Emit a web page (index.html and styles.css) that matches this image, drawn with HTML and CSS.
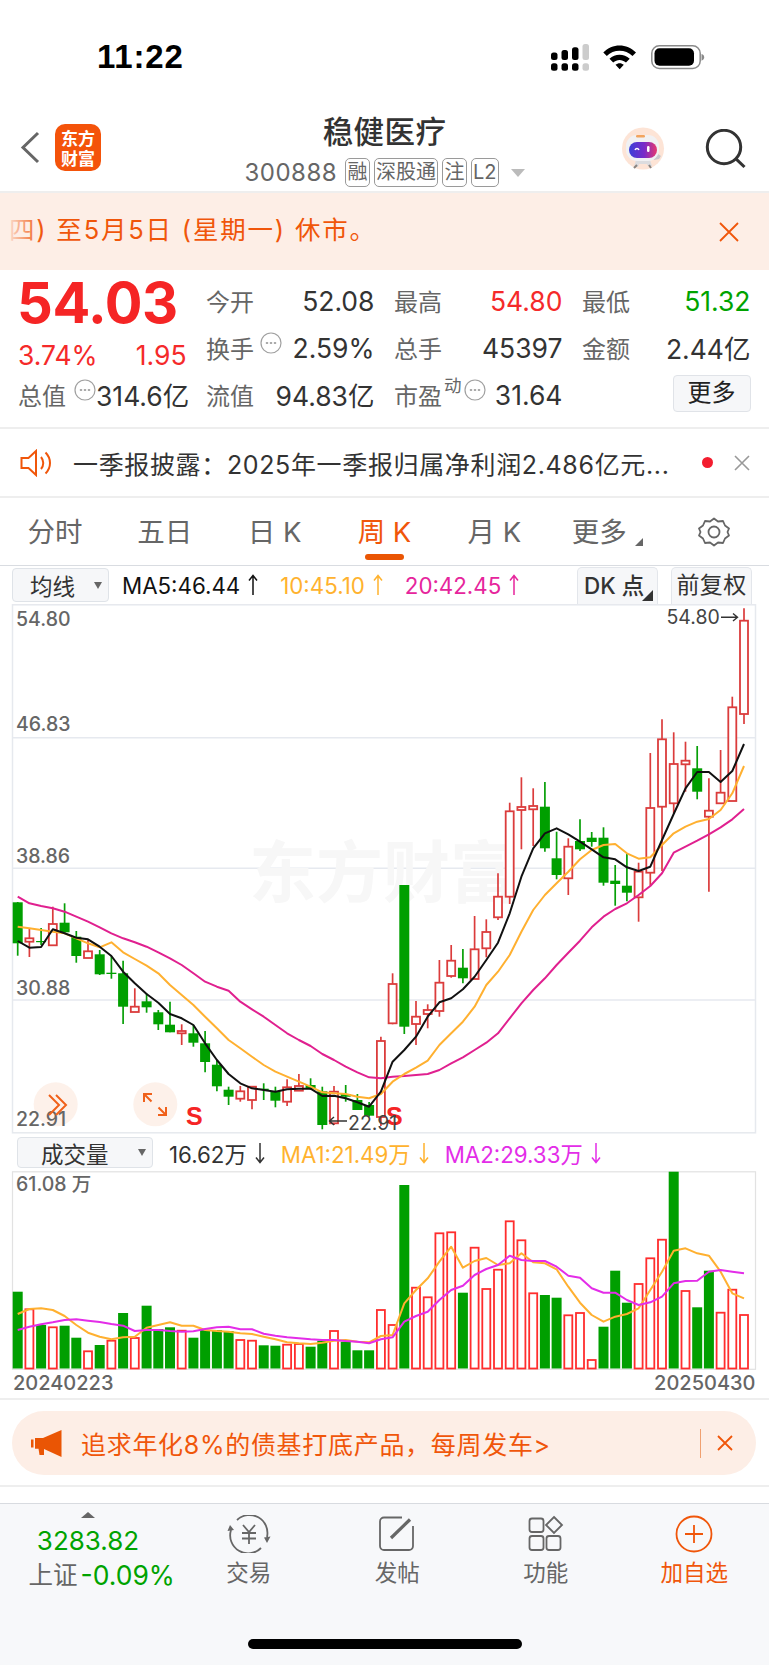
FILE: index.html
```html
<!DOCTYPE html>
<html lang="zh-CN">
<head>
<meta charset="utf-8">
<title>稳健医疗</title>
<link rel="stylesheet" href="styles.css">
</head>
<body>
<div class="page">
  <div class="status">
    <div class="time">11:22</div>
    <svg class="status-icons" viewBox="545 40 165 35" width="165" height="35">
      <g class="sig">
        <rect x="551" y="52.5" width="6.5" height="7.5" rx="2.5"/><rect x="551" y="63.3" width="6.5" height="7.4" rx="2.5"/>
        <rect x="561.5" y="50" width="6.5" height="10" rx="2.5"/><rect x="561.5" y="63.3" width="6.5" height="7.4" rx="2.5"/>
        <rect x="572" y="47.3" width="6.5" height="12.7" rx="2.5"/><rect x="572" y="63.3" width="6.5" height="7.4" rx="2.5"/>
      </g>
      <g class="sig-off">
        <rect x="582.5" y="44" width="6.5" height="16" rx="2.5"/><rect x="582.5" y="63.3" width="6.5" height="7.4" rx="2.5"/>
      </g>
      <path class="wifi" d="M603.3 52.5C612 43 627 43 636 52.5L632.5 56C625.5 49 613.5 49 606.8 56ZM609.5 58.8C615 53.5 624 53.5 629.7 58.8L626 62.5C622 59 617 59 613.2 62.5ZM615.5 64.8C618 62.6 621.4 62.6 623.8 64.8L619.7 69.2Z"/>
      <rect class="bat-o" x="651.8" y="45.8" width="48.4" height="22.6" rx="7.5"/>
      <rect class="bat-i" x="654.5" y="48.3" width="39.5" height="17.5" rx="5"/>
      <path class="bat-c" d="M701.5 54C703.5 54.5 704.2 56 704.2 57.3S703.5 60.2 701.5 60.7Z"/>
    </svg>
  </div>

  <header class="nav">
    <div class="nav-left">
      <svg class="back" viewBox="0 0 20 33" width="20" height="33"><path d="M18 2L3 16.5L18 31"/></svg>
      <div class="logo"><span>东方</span><span>财富</span></div>
    </div>
    <div class="nav-mid">
      <h1 class="title">稳健医疗</h1>
      <div class="sub">
        <span class="code">300888</span>
        <span class="tag t1">融</span><span class="tag t3">深股通</span><span class="tag t1">注</span><span class="tag t2">L2</span>
        <span class="tri-down"></span>
      </div>
    </div>
    <div class="nav-right">
      <svg class="robot" viewBox="0 0 43 43" width="43" height="43">
        <defs>
          <linearGradient id="visor" x1="0" y1="0" x2="1" y2="0">
            <stop offset="0" stop-color="#3a3fd8"/><stop offset=".55" stop-color="#7a2bc8"/><stop offset="1" stop-color="#e8386e"/>
          </linearGradient>
        </defs>
        <circle class="rb-bg" cx="21" cy="21.5" r="21"/>
        <path class="rb-body" d="M14 33h14l2 6h-4l-1-2h-8l-1 3h-4Z"/>
        <path class="rb-arm" d="M31 30l5-3 3 2-2 3-5 1Z"/>
        <path class="rb-limb" d="M15 38l-3 3M27 38l2 3"/>
        <rect class="rb-head" x="4" y="8" width="33" height="26" rx="11"/>
        <rect class="rb-visor" x="7" y="15" width="28" height="16" rx="8" fill="url(#visor)"/>
        <path class="rb-eye" d="M13 23c1-2 3-2 4 0"/>
        <rect class="rb-eye2" x="25" y="19" width="2.5" height="6" rx="1.2"/>
        <rect class="rb-cap" x="14" y="8" width="9" height="2.5" rx="1.2"/>
      </svg>
      <svg class="search" viewBox="0 0 42 40" width="42" height="40"><circle cx="19" cy="18" r="16.7"/><path d="M31 29.8L39.5 38"/></svg>
    </div>
  </header>

  <div class="notice">
    <span class="notice-text">四) 至5月5日 (星期一) 休市。</span>
    <svg class="x-orange" viewBox="0 0 20 20" width="20" height="20"><path d="M1 1L19 19M19 1L1 19"/></svg>
    <span class="notice-fade"></span>
  </div>

  <section class="quote">
    <div class="price">54.03</div>
    <div class="cell"><span class="lb">今开</span><span class="val">52.08</span></div>
    <div class="cell"><span class="lb">最高</span><span class="val red">54.80</span></div>
    <div class="cell"><span class="lb">最低</span><span class="val green">51.32</span></div>
    <div class="cell low"><span class="val red">3.74%</span><span class="val red">1.95</span></div>
    <div class="cell">
      <span class="lb">换手</span>
      <svg class="info" viewBox="0 0 22 22" width="22" height="22"><circle cx="11" cy="11" r="10"/><path d="M6.5 11h1M10.5 11h1M14.5 11h1"/></svg>
      <span class="val push">2.59%</span>
    </div>
    <div class="cell"><span class="lb">总手</span><span class="val">45397</span></div>
    <div class="cell"><span class="lb">金额</span><span class="val">2.44亿</span></div>
    <div class="cell">
      <span class="lb">总值</span>
      <svg class="info info-b" viewBox="0 0 22 22" width="22" height="22"><circle cx="11" cy="11" r="10"/><path d="M6.5 11h1M10.5 11h1M14.5 11h1"/></svg>
      <span class="val push">314.6亿</span>
    </div>
    <div class="cell"><span class="lb">流值</span><span class="val">94.83亿</span></div>
    <div class="cell">
      <span class="lb">市盈</span><sup class="dyn">动</sup>
      <svg class="info" viewBox="0 0 22 22" width="22" height="22"><circle cx="11" cy="11" r="10"/><path d="M6.5 11h1M10.5 11h1M14.5 11h1"/></svg>
      <span class="val push">31.64</span>
    </div>
    <div class="cell end"><button class="more">更多</button></div>
  </section>

  <div class="news">
    <svg class="speaker" viewBox="0 0 33 28" width="33" height="28">
      <path d="M1.5 9h7L16 2v24l-7.500-7h-7Z"/><path d="M21 8c3 3.500 3 8.500 0 12"/><path d="M25.500 3.500c6 6 6 15 0 21"/>
    </svg>
    <span class="news-text">一季报披露：2025年一季报归属净利润2.486亿元...</span>
    <span class="dot"></span>
    <svg class="x-gray" viewBox="0 0 16 16" width="16" height="16"><path d="M1 1L15 15M15 1L1 15"/></svg>
  </div>

  <nav class="tabs">
    <div class="tab">分时</div>
    <div class="tab">五日</div>
    <div class="tab">日 K</div>
    <div class="tab on">周 K<span class="tab-u"></span></div>
    <div class="tab">月 K</div>
    <div class="tab tab-more">更多<span class="corner"></span></div>
    <div class="tab">
      <svg class="gear" viewBox="0 0 32 30" width="32" height="30"><path d="M16 1.500l4 3 5-.500 2 4.500 4 3-1.500 3.500 1.500 3.500-4 3-2 4.500-5-.500-4 3-4-3-5 .500-2-4.500-4-3 1.500-3.500L1 11.500l4-3 2-4.500 5 .500Z"/><circle cx="16" cy="15" r="5.500"/></svg>
    </div>
  </nav>

  <div class="bar bar-k">
    <div class="sel sel-k"><span>均线</span><i class="sel-tri"></i></div>
    <span class="ma c-black">MA5:46.44<svg class="ar" viewBox="0 0 12 22" width="12" height="22"><path d="M6 21V2M2 6.500L6 1.500L10 6.500"/></svg></span>
    <span class="ma c-orange">10:45.10<svg class="ar" viewBox="0 0 12 22" width="12" height="22"><path d="M6 21V2M2 6.500L6 1.500L10 6.500"/></svg></span>
    <span class="ma c-pink">20:42.45<svg class="ar" viewBox="0 0 12 22" width="12" height="22"><path d="M6 21V2M2 6.500L6 1.500L10 6.500"/></svg></span>
    <div class="btns">
      <div class="btn btn-dk">DK 点<i class="btn-corner"></i></div>
      <div class="btn">前复权</div>
    </div>
  </div>

  <svg class="chart" id="kchart" viewBox="0 604 769 530" width="769" height="530">
    <rect class="frame" x="12.5" y="604.8" width="743" height="528"/>
    <path class="grid" d="M13 737.700H755M13 868.300H755M13 1000H755"/>
    <text class="wm" x="249" y="897">东方财富</text>
    <circle class="fab" cx="55.700" cy="1104.300" r="22"/>
    <circle class="fab" cx="155.300" cy="1104.300" r="22"/>
    <text class="axis" x="16" y="626">54.80</text>
    <text class="axis" x="16" y="731">46.83</text>
    <text class="axis" x="16" y="862.500">38.86</text>
    <text class="axis" x="16" y="994.500">30.88</text>
    <text class="axis" x="16" y="1126">22.91</text>
    <g id="candles"></g>
    <path class="fab-ic" d="M49 1095L59 1105L49 1115M56 1095L66 1105L56 1115"/>
    <path class="fab-ic" d="M144 1102V1094H152M144 1094L151.500 1101.500M166 1107V1115H158M158.500 1107.500L166 1115"/>
    <text class="sflag" x="186" y="1125">S</text>
    <text class="sflag" x="386" y="1125">S</text>
    <text class="mark" x="666.500" y="624">54.80</text>
    <path class="mark-ar" d="M721 617.300H737M733 613.500L737.500 617.300L733 621"/>
    <text class="mark" x="348" y="1129.500">22.91</text>
    <path class="mark-ar" d="M347 1121H330M334 1117L329.500 1121L334 1125"/>
  </svg>

  <div class="bar bar-v">
    <div class="sel sel-v"><span>成交量</span><i class="sel-tri"></i></div>
    <span class="ma c-dark">16.62万<svg class="ar" viewBox="0 0 12 22" width="12" height="22"><path d="M6 1V20M2 15.500L6 20.500L10 15.500"/></svg></span>
    <span class="ma c-orange">MA1:21.49万<svg class="ar" viewBox="0 0 12 22" width="12" height="22"><path d="M6 1V20M2 15.500L6 20.500L10 15.500"/></svg></span>
    <span class="ma c-mag">MA2:29.33万<svg class="ar" viewBox="0 0 12 22" width="12" height="22"><path d="M6 1V20M2 15.500L6 20.500L10 15.500"/></svg></span>
  </div>

  <svg class="chart" id="vchart" viewBox="0 1171 769 227" width="769" height="227">
    <rect class="frame-v" x="12.500" y="1171.800" width="743" height="197.500"/>
    <text class="axis" x="16" y="1191">61.08 万</text>
    <g id="vols"></g>
    <text class="axis date" x="13" y="1390">20240223</text>
    <text class="axis date end-a" x="755.500" y="1390">20250430</text>
  </svg>

  <div class="promo-wrap">
    <div class="promo">
      <svg class="horn" viewBox="0 0 31 27" width="31" height="27"><path d="M0 9.500h2.500v8H0ZM4 8h8L30.500 0v27L13 19v6H8.500L7.500 18.700H4Z"/></svg>
      <span class="promo-text">追求年化8%的债基打底产品，每周发车&gt;</span>
      <span class="promo-div"></span>
      <svg class="x-orange x-s" viewBox="0 0 16 16" width="16" height="16"><path d="M1 1L15 15M15 1L1 15"/></svg>
    </div>
  </div>

  <div class="gap"></div>

  <footer class="foot">
    <div class="foot-grid">
      <div class="idx">
        <div class="idx-top"><span class="tri-up"></span><span class="idx-num">3283.82</span></div>
        <div class="idx-line"><span class="idx-name">上证</span><span class="idx-pct">-0.09%</span></div>
      </div>
      <div class="act">
        <svg class="act-ic" viewBox="228 1515 44 38" width="44" height="38">
          <path d="M238 1520A18 18 0 0 1 268 1537M262 1548A18 18 0 0 1 232 1530"/>
          <path class="solid" d="M265 1537.500L271.500 1536.500L268 1543ZM228.500 1531L235 1530L231 1525Z"/>
          <path d="M244 1525L250 1532L256 1525M243 1533H257M243 1538.500H257M250 1532V1544"/>
        </svg>
        <span>交易</span>
      </div>
      <div class="act">
        <svg class="act-ic" viewBox="379 1515 40 38" width="40" height="38">
          <path d="M404 1517.500H386A4 4 0 0 0 382 1521.500V1546A4 4 0 0 0 386 1550H411A4 4 0 0 0 415 1546V1526"/>
          <path class="thick" d="M393 1538L412 1519.500"/>
        </svg>
        <span>发帖</span>
      </div>
      <div class="act">
        <svg class="act-ic" viewBox="528 1515 38 38" width="38" height="38">
          <rect x="530.500" y="1518.500" width="14" height="13.500" rx="2.500"/>
          <rect x="530.500" y="1536" width="14" height="14" rx="2.500"/>
          <rect x="547.500" y="1536" width="14" height="14" rx="2.500"/>
          <path d="M555 1517L563 1525L555 1533L547 1525Z"/>
        </svg>
        <span>功能</span>
      </div>
      <div class="act act-on">
        <svg class="act-ic" viewBox="675 1515 40 38" width="40" height="38">
          <circle cx="695" cy="1534" r="17.500"/><path d="M686 1534H704M695 1525V1543"/>
        </svg>
        <span>加自选</span>
      </div>
    </div>
    <div class="home"></div>
  </footer>
</div>
<script src="chart.js"></script>
</body>
</html>
```
FILE: styles.css
```css
* { box-sizing: border-box; }
html, body { margin: 0; padding: 0; background: #fff; }
body { font-family: Inter, "Noto Sans CJK SC", sans-serif; color: #333; }
.page { width: 769px; height: 1665px; overflow: hidden; display: flex; flex-direction: column; }

/* status */
.status { height: 100px; flex: none; display: flex; align-items: flex-start; padding: 45px 59px 0 97px; justify-content: space-between; }
.time { font-family: "Liberation Sans", sans-serif; font-weight: 700; font-size: 33px; line-height: 24px; color: #000; letter-spacing: .8px; }
.status-icons { display: block; margin-top: -5px; }
.sig rect { fill: #000; }
.sig-off rect { fill: #ccc; }
.wifi { fill: #000; }
.bat-o { fill: none; stroke: #8a8a8a; stroke-width: 1.5; }
.bat-i { fill: #000; }
.bat-c { fill: #8a8a8a; }

/* nav */
.nav { height: 93px; flex: none; border-bottom: 2px solid #eeeeee; display: grid; grid-template-columns: 1fr auto 1fr; align-items: start; }
.nav-left { display: flex; align-items: center; gap: 15px; padding-left: 20px; margin-top: 24px; }
.back { fill: none; stroke: #666; stroke-width: 3; margin-top: 0; }
.logo { width: 46px; height: 47px; border-radius: 10px; background: #f4530a; color: #fff; display: flex; flex-direction: column; align-items: center; justify-content: center; font-family: "Noto Sans CJK SC", sans-serif; font-weight: 700; font-size: 17px; line-height: 20px; }
.logo span { display: block; }
.nav-mid { display: flex; flex-direction: column; align-items: center; padding-top: 13px; }
.title { margin: 0; font-family: "Noto Sans CJK SC", sans-serif; font-weight: 500; font-size: 30.5px; line-height: 35px; color: #333; letter-spacing: .4px; }
.sub { display: flex; align-items: center; height: 29px; margin-top: 10px; gap: 4px; }
.code { font-size: 24px; color: #666; letter-spacing: .5px; margin-right: 4px; }
.tag { height: 29px; border: 1px solid #9a9a9a; border-radius: 5px; font-size: 20px; line-height: 26px; color: #666; text-align: center; white-space: nowrap; }
.t1 { width: 25px; }
.t2 { width: 27.5px; }
.t3 { width: 64px; }
.tri-down { width: 0; height: 0; margin-left: 8px; border-left: 7px solid transparent; border-right: 7px solid transparent; border-top: 8px solid #bbb; }
.nav-right { display: flex; justify-content: flex-end; align-items: center; gap: 40px; padding-right: 22px; margin-top: 27px; }
.rb-bg { fill: #fde4d6; }
.rb-head { fill: #f1f1f3; }
.rb-body { fill: #dcdcdf; }
.rb-arm { fill: #c9c9cc; }
.rb-limb { stroke: #8c8580; stroke-width: 2; fill: none; }
.rb-eye { stroke: #fff; stroke-width: 1.5; fill: none; }
.rb-eye2 { fill: #fff; }
.rb-cap { fill: #f2a45f; }
.search { fill: none; stroke: #333; stroke-width: 3; }

/* notice */
.notice { position: relative; height: 77px; flex: none; background: #fdeee6; display: flex; align-items: center; justify-content: space-between; padding-right: 30px; overflow: hidden; }
.notice-text { margin-left: 9px; font-size: 25.5px; line-height: 50px; margin-top: -3px; color: #f0560a; white-space: nowrap; letter-spacing: 1.8px; }
.notice-fade { position: absolute; left: 0; top: 0; bottom: 0; width: 42px; background: linear-gradient(90deg, #fdeee6 10%, rgba(253,238,230,0)); }
.x-orange { fill: none; stroke: #f0560a; stroke-width: 1.8; flex: none; }

/* quote */
.quote { height: 159px; flex: none; border-bottom: 2px solid #eeeeee; padding: 7px 0 0 18px; display: grid; grid-template-columns: repeat(4, 168.5px); grid-auto-rows: 47px; column-gap: 19.5px; }
.price { font-weight: 700; font-size: 56px; line-height: 52px; color: #f52525; letter-spacing: -.4px; white-space: nowrap; margin-left: -1px; }
.cell { display: flex; align-items: center; justify-content: space-between; }
.cell.low { padding-top: 15px; }
.cell.end { justify-content: flex-end; }
.lb { font-size: 24px; color: #666; flex: none; }
.val { font-size: 26.5px; color: #333; white-space: nowrap; }
.val.push { margin-left: auto; }
.red { color: #f52a2a; }
.green { color: #00a300; }
.info { fill: none; stroke: #a0a0a0; stroke-width: 1.2; align-self: flex-start; margin: 8px 0 0 6px; flex: none; }
.info path { stroke-linecap: round; stroke: #888; stroke-width: 1.6; }
.info-b { margin-left: 8px; }
.dyn { align-self: flex-start; margin: 5px 0 0 2px; font-size: 17.5px; line-height: 20px; color: #666; vertical-align: baseline; }
.dyn + .info { margin-left: 2px; }
.more { width: 78px; height: 37px; margin-top: -3px; background: #f6f7f9; border: 1.5px solid #e0e3e8; border-radius: 4px; font: inherit; font-size: 24px; line-height: 30px; color: #222; padding: 0; }

/* news */
.news { height: 69px; flex: none; border-bottom: 2px solid #eeeeee; display: flex; align-items: center; padding: 0 20px; }
.speaker { fill: none; stroke: #f0560a; stroke-width: 2; flex: none; }
.news-text { font-size: 25px; color: #333; margin-left: 20px; white-space: nowrap; width: 608px; flex: none; letter-spacing: .65px; }
.dot { width: 11px; height: 11px; border-radius: 50%; background: #f31d2f; flex: none; margin-left: 21px; }
.x-gray { fill: none; stroke: #999; stroke-width: 1.6; flex: none; margin-left: 21px; }

/* tabs */
.tabs { height: 68px; flex: none; border-bottom: 1px solid #d9dce1; display: grid; grid-template-columns: repeat(7, 1fr); }
.tab { display: flex; flex-direction: column; align-items: center; position: relative; font-size: 27.5px; line-height: 36px; color: #666; padding-top: 16px; white-space: nowrap; }
.tab.on { color: #f0560a; }
.tab-more { padding-right: 10px; }
.tab-u { width: 39px; height: 6px; border-radius: 3px; background: #ea5504; margin-top: 4px; }
.corner { position: absolute; left: 86px; top: 40px; width: 0; height: 0; border-bottom: 8px solid #666; border-left: 8px solid transparent; }
.gear { fill: none; stroke: #666; stroke-width: 1.8; stroke-linejoin: round; margin-top: 3px; }

/* toolbars */
.bar { flex: none; display: flex; align-items: center; }
.bar-k { height: 38px; padding: 0 17px 0 12px; gap: 21px; }
.bar-v { height: 37px; padding: 0 0 0 17px; gap: 15px; }
.sel { display: flex; align-items: center; justify-content: space-between; background: #f6f7f9; border: 1.5px solid #dfe3e8; border-radius: 4px; color: #333; font-size: 22.5px; font-family: "Noto Sans CJK SC", sans-serif; }
.sel-k { width: 97px; height: 34px; padding: 0 6px 0 17px; margin-right: -8px; }
.sel-v { width: 136px; height: 31px; padding: 0 6px 0 23px; margin-right: 1px; }
.sel-tri { width: 0; height: 0; border-left: 4.5px solid transparent; border-right: 4.5px solid transparent; border-top: 7px solid #666; }
.ma { font-size: 22.3px; white-space: nowrap; display: flex; align-items: center; }
.ar { fill: none; stroke: currentColor; stroke-width: 1.5; margin-left: 7px; flex: none; }
.c-black { color: #111; }
.c-dark { color: #333; }
.c-orange { color: #ffb22e; }
.c-pink { color: #e6259c; }
.c-mag { color: #e32de8; }
.btns { display: flex; gap: 13px; margin-left: auto; align-self: flex-end; }
.btn { position: relative; width: 81px; height: 37px; background: #f6f7f9; border: 1.5px solid #e3e6eb; border-bottom: 0; border-radius: 5px 5px 0 0; font-size: 23px; line-height: 35px; text-align: center; color: #333; letter-spacing: .4px; white-space: nowrap; }
.btn-dk { font-weight: 500; text-align: left; padding-left: 6px; font-size: 22.5px; letter-spacing: 0; }
.btn-corner { position: absolute; right: 4px; bottom: 3px; width: 0; height: 0; border-bottom: 11px solid #333; border-left: 11px solid transparent; }

/* charts */
.chart { display: block; flex: none; }
.frame { fill: #fff; stroke: #e6e9ee; stroke-width: 1.5; }
.frame-v { fill: #fff; stroke: #e2e2e2; stroke-width: 1.2; }
.grid { stroke: #e6e9ef; stroke-width: 1.5; fill: none; }
.wm { font-family: "Noto Sans CJK SC", sans-serif; font-weight: 700; font-size: 67px; fill: #f7f7f7; }
.fab { fill: #fdeee6; opacity: .85; }
.fab-ic { fill: none; stroke: #f0611a; stroke-width: 2; }
.axis { font-size: 19.5px; font-weight: 500; fill: #666; }
.date { font-size: 20px; }
.end-a { text-anchor: end; }
.sflag { font-family: "Liberation Sans", sans-serif; font-weight: 700; font-size: 25px; fill: #f52525; }
.mark { font-size: 19.5px; fill: #444; }
.mark-ar { fill: none; stroke: #333; stroke-width: 1.4; }
.cw-r { stroke: #db3c3c; stroke-width: 1.7; }
.cb-r { fill: #fff; stroke: #db3c3c; stroke-width: 1.8; }
.cw-g { stroke: #079f07; stroke-width: 1.7; }
.cb-g { fill: #009f00; }
.ln { fill: none; stroke-width: 2; stroke-linejoin: round; }
.l-k { stroke: #111; }
.l-o { stroke: #ffb030; }
.l-p { stroke: #e0208f; }
.l-m { stroke: #e32de8; }
.vb-g { fill: #009f00; }
.vb-r { fill: #fff; stroke: #ff2d2d; stroke-width: 1.8; }

/* promo */
.promo-wrap { flex: none; height: 89px; border-top: 2px solid #eeeeee; border-bottom: 2px solid #eeeeee; padding: 11px 13px 0 12px; }
.promo { height: 64px; border-radius: 32px; background: #fdeee6; display: flex; align-items: center; padding: 0 23px 0 19px; }
.horn { fill: #ea5504; flex: none; }
.promo-text { margin-left: 19px; font-size: 25px; color: #f0560a; white-space: nowrap; letter-spacing: .7px; }
.promo-div { width: 1.5px; height: 29px; background: #f0a070; margin-left: auto; }
.x-s { margin-left: 16px; }
.gap { height: 16px; flex: none; }

/* footer */
.foot { flex: 1; background: #f7f8fa; border-top: 1.5px solid #d8dbe0; }
.foot-grid { display: grid; grid-template-columns: repeat(5, 148.5px); padding: 7.5px 0 0 26px; }
.idx { display: flex; flex-direction: column; align-items: flex-start; }
.idx-top { display: flex; flex-direction: column; align-items: center; width: 100px; margin-left: 12px; }
.tri-up { width: 0; height: 0; border-left: 7px solid transparent; border-right: 7px solid transparent; border-bottom: 6px solid #666; margin-bottom: 6px; }
.idx-num { font-size: 26px; line-height: 34px; color: #00a300; }
.idx-line { display: flex; align-items: center; margin-left: 2.5px; line-height: 34px; white-space: nowrap; }
.idx-name { font-size: 24.5px; color: #666; }
.idx-pct { font-size: 26.5px; color: #00a300; margin-left: 3px; }
.act { display: flex; flex-direction: column; align-items: center; padding-top: 3px; font-size: 22.5px; line-height: 30px; color: #666; }
.act-ic { fill: none; stroke: #666; stroke-width: 1.8; margin-bottom: 5px; }
.act-ic .solid { fill: #666; stroke: none; }
.act-ic .thick { stroke-width: 3.2; }
.act-on { color: #f0560a; }
.act-on .act-ic { stroke: #f0560a; }
.home { width: 274px; height: 10px; border-radius: 5px; background: #000; margin: 47px 0 0 248px; }
```
FILE: chart.js
```js
var X0 = 17.7, DX = 11.715;
function x(i) { return +(X0 + DX * i).toFixed(1); }
// type, high, body top, body bottom, low
var C = [
['g',902,902.3,943.3,955.7],['r',928,938.3,941.7,957],['g',928,941,942.2,945],['r',906.7,924,945.3,946],['g',903.3,922.7,932.3,933],
['g',931,936.7,956,962.7],['r',939.3,951.3,958,958],['g',950,954.3,974.3,975],['g',956,972.7,974,978.7],['g',960.7,973.3,1006.7,1024],
['r',988.3,1006.7,1012,1012],['g',993.3,1001.3,1007.3,1012.7],['g',1010,1012.3,1024.3,1030],['g',1001.7,1024.7,1032.3,1032.3],['r',1024.3,1031,1033.3,1045],
['g',1025,1033.3,1042.7,1046.7],['g',1031,1043.3,1062,1072.3],['g',1060,1064.7,1086.3,1091.3],['g',1086.7,1089.7,1096.7,1105],['r',1086,1091.3,1098.7,1101.7],
['r',1086.7,1086.7,1100,1109.3],['g',1083.3,1088.7,1090,1100],['g',1086.7,1091,1100.7,1107.3],['r',1079.3,1087.3,1101.7,1106],['r',1074,1086,1090.7,1091],
['g',1078.3,1085,1088.3,1090],['g',1086.7,1091.3,1125,1129.3],['r',1086,1091.7,1123.3,1125],['g',1085,1094,1096.7,1101.7],['g',1094,1100,1110,1110],
['g',1102,1105,1115.7,1116.7],['r',1036.7,1041,1117,1126],['r',973.3,984,1023.3,1024.3],['g',885,885,1026.7,1034],['r',1001,1016.7,1024,1045],
['r',1004.3,1010,1014,1028.3],['r',960,982.7,1011,1016.7],['r',945,960.7,976,977.7],['g',949,967.7,978.3,983.3],['r',916,949.3,979,979],
['r',919.3,932,948.3,957.3],['r',873.3,896.7,917.3,920],['r',802.7,811.3,896.7,904],['r',777.3,807,810,849.3],['r',788.3,806,809.3,846],
['g',782,806.7,848.3,851.7],['g',831.7,858.3,875,879.3],['r',838.3,846.7,878.3,895],['g',819.3,841,849.3,851],['g',832,837.7,842,846.7],
['g',827.3,837.7,882.7,885.7],['g',865,880.7,884,905.7],['g',853.3,885.7,892.7,901.3],['r',862.7,871.7,897.3,921.7],['r',753,808,872.7,885.7],
['r',719.3,739.3,806.7,871],['r',732.3,764,803.3,813],['r',741.7,760.7,764.3,791.7],['g',746,768.3,791.7,799.3],['r',778.3,810.7,816.7,891.7],
['r',750,792.7,803.3,803.3],['r',696.7,707.3,801,801],['r',608.3,620.7,714,724]
];
var MA5 = [941,947.7,947,929.3,933.3,937.7,939.3,946.7,956,971.7,983.3,994,1002.7,1014,1018.3,1025,1043.3,1060,1074,1083.3,1088.3,1090,1091.7,1089.3,1088.7,1088.7,1096,1095.7,1098.3,1102.3,1106.7,1091.7,1061.7,1050,1036.7,1016.7,1002.3,998.3,989.3,976.7,960,942.7,913.3,876.7,848.3,833.3,828.3,834.3,841.7,849.3,857.3,859.3,867.3,871,866.7,840,814,788.3,772,772,782,771,744];
var MA10 = [926.7,928.3,930,931.7,933.3,938.3,943.3,947.3,942.3,952.3,959,965.7,973.3,985,995,1005,1016.7,1028.3,1040,1048.3,1056.7,1065,1071.7,1076.7,1081.7,1086.7,1092.3,1093.3,1094,1096.7,1098.3,1094,1081.7,1074,1067.7,1060.7,1045,1033.3,1021.7,1006.7,985,971.7,955,931.7,910,895,883.3,871.7,859.3,850,845,844,853.3,858.7,857.3,845,833.3,826.7,821.7,819,810,793.3,766];
var MA20 = [896.7,903.3,906,908.3,911.7,916.7,921.7,927.3,933.3,938.3,942.3,946.7,952.3,958.3,965,973.3,981.7,986.7,990.7,1001.7,1009.3,1016.7,1025,1033.3,1040,1046,1054,1060,1066.7,1072.3,1077.3,1078.3,1076.7,1076,1075,1074,1070,1063.3,1057.3,1050,1042.7,1033.3,1018.3,1003.3,990,978.3,965,952.7,940.7,927.3,916.7,909,903.3,895,886,873.3,852.7,846.7,840.7,834.3,827.3,819.3,809];
var V = ['g1291.7','r1309.3','g1325','r1327.3','g1325.7','g1337.7','r1351.3','g1345','r1340.7','g1313','r1338','g1305.7','g1329','g1327.3','r1330.7','g1337.7','g1330','g1330','g1331','r1340','r1340.7','g1345.3','g1345.7','r1344.7','r1344','g1346.7','g1340.7','r1331','g1341.7','g1350.3','g1350.3','r1310','r1325','g1185','r1287.7','r1297.3','r1233.3','r1232.3','g1292.7','r1247.7','r1289','r1269.7','r1221.3','r1240.3','r1293.3','g1295','g1297.7','r1315.3','r1313','r1360','g1326.7','g1270.7','g1302.7','r1284','r1258.3','r1239.7','g1171.7','r1291','g1307.3','g1270.7','r1312.7','r1289.7','r1315'];
var MA1 = [1314,1309,1308.3,1310,1316,1325,1332.7,1336.7,1339.3,1337.3,1336.7,1327.7,1325,1322.3,1325.7,1325.7,1330,1331,1331.7,1333.3,1334,1336.7,1339.3,1342.3,1343.3,1344,1342.7,1340.7,1340,1341.7,1342.3,1336,1335,1303.3,1290,1278.3,1261.7,1246.7,1267.7,1261,1258,1265,1263.3,1253.3,1262.3,1263.3,1269.3,1286.7,1302.7,1315,1321.7,1316.7,1314,1308.3,1290,1271.7,1250.7,1248.3,1253.3,1255.7,1271.7,1293.3,1298.3];
var MA2 = [1330,1326.7,1324.3,1322.3,1320,1319.3,1320.7,1322,1324,1325.7,1331,1330,1330,1331,1331.7,1331.3,1329,1327.3,1326.7,1329.3,1329.3,1333.7,1335.7,1337.3,1338.3,1339.3,1340,1340,1341,1341.7,1343.3,1339.3,1337.3,1321.7,1316,1311.7,1300,1290,1285.7,1275,1269,1265,1255.7,1260,1261,1261,1266.7,1275.7,1277.7,1288.3,1292.7,1292.7,1300,1305,1302.3,1296.7,1283.3,1281,1280.7,1271.7,1270,1271.7,1273.3];

function poly(cls, ys) {
  var pts = ys.map(function (y, i) { return x(i) + ',' + y; }).join(' ');
  return '<polyline class="ln ' + cls + '" points="' + pts + '"/>';
}

var k = '';
C.forEach(function (c, i) {
  var cx = x(i), t = c[0], hi = c[1], top = c[2], bot = c[3], lo = c[4];
  k += '<line class="cw-' + t + '" x1="' + cx + '" x2="' + cx + '" y1="' + hi + '" y2="' + lo + '"/>';
  if (t === 'r') {
    k += '<rect class="cb-r" x="' + (cx - 4).toFixed(1) + '" y="' + top + '" width="8" height="' + (bot - top).toFixed(1) + '"/>';
  } else {
    k += '<rect class="cb-g" x="' + (cx - 5).toFixed(1) + '" y="' + top + '" width="10" height="' + (bot - top).toFixed(1) + '"/>';
  }
});
k += poly('l-p', MA20) + poly('l-o', MA10) + poly('l-k', MA5);
document.getElementById('candles').innerHTML = k;

var v = '', BASE = 1368.5;
V.forEach(function (s, i) {
  var t = s.charAt(0), top = parseFloat(s.slice(1)), cx = x(i);
  if (t === 'r') {
    v += '<rect class="vb-r" x="' + (cx - 4).toFixed(1) + '" y="' + top + '" width="8" height="' + (BASE - top).toFixed(1) + '"/>';
  } else {
    v += '<rect class="vb-g" x="' + (cx - 5).toFixed(1) + '" y="' + top + '" width="10" height="' + (BASE - top).toFixed(1) + '"/>';
  }
});
v += poly('l-o', MA1) + poly('l-m', MA2);
document.getElementById('vols').innerHTML = v;
```
